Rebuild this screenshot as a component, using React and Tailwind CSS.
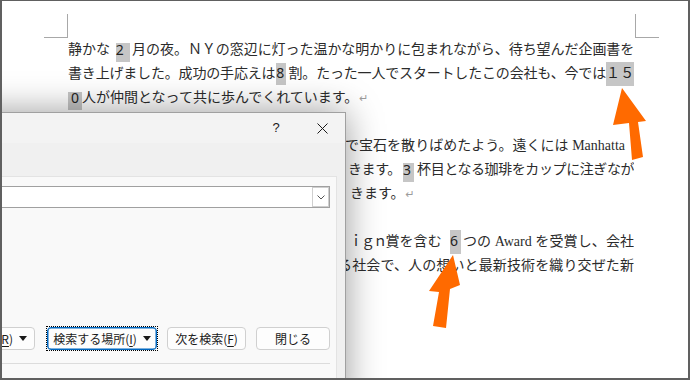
import React from "react";

function Hl({ children, className = "" }) {
  return (
    <span className={"inline-block bg-[#c6c6c6] text-center align-top text-[#222] " + className}>
      {children}
    </span>
  );
}

function Ret() {
  return <span className="ml-[1px] font-['DejaVu_Sans',sans-serif] text-[11px] text-[#9c9c9c]">↵</span>;
}

function Caret() {
  return (
    <svg width="8" height="5" viewBox="0 0 8 5" className="ml-[6px] shrink-0">
      <path d="M0 0h8L4 5z" fill="#1a1a1a" />
    </svg>
  );
}

function Btn({ children, className = "" }) {
  return (
    <button className={"flex h-[23px] shrink-0 items-center justify-center whitespace-nowrap rounded-[4px] border bg-[#fdfdfd] text-[12px] text-[#1a1a1a] " + className}>
      {children}
    </button>
  );
}

function Key({ children }) {
  return <span className="underline underline-offset-2">{children}</span>;
}

// row whose left part is hidden under the dialog: only the visible tail is set
function CutLine({ pad, className = "", children }) {
  return (
    <div className={"flex h-[24px] overflow-hidden leading-[24px] " + className}>
      <span className={"shrink-0 " + pad} />
      <span className="flex-1 [text-align-last:justify]">{children}</span>
    </div>
  );
}

export default function App() {
  return (
    <div className="relative h-[380px] w-[690px] overflow-hidden bg-white font-['Liberation_Serif','Noto_Sans_CJK_JP',serif] text-[14px] text-[#2b2b2b]">
      {/* document page */}
      <div className="pl-[44px] pt-[14px]">
        <div className="flex w-[615px] justify-between">
          <div className="h-[24px] w-[24px] border-b border-r border-[#a8a8a8]" />
          <div className="h-[24px] w-[24px] border-b border-l border-[#a8a8a8]" />
        </div>

        <div className="ml-[24px] w-[566px]">
          <div className="h-[24px] overflow-hidden leading-[24px] tracking-[-0.3px] [text-align-last:justify]">
            静かな
            <Hl className="ml-[6px] mr-[2px] mt-[5px] h-[19px] w-[14px] font-['Noto_Sans',sans-serif] leading-[14px]">2</Hl>
            月の夜。ＮＹの窓辺に灯った温かな明かりに包まれながら、待ち望んだ企画書を
          </div>
          <div className="h-[24px] overflow-hidden leading-[24px] tracking-[-0.3px] [text-align-last:justify]">
            書き上げました。成功の手応えは
            <Hl className="ml-[1px] mr-[2px] mt-[1px] h-[22px] w-[10px] font-['Noto_Sans',sans-serif] leading-[20px]">8</Hl>
            割。たった一人でスタートしたこの会社も、今では
            <Hl className="h-[24px] w-[28px] leading-[24px]">１５</Hl>
          </div>
          <div className="h-[24px] overflow-hidden whitespace-nowrap leading-[24px]">
            <Hl className="mt-[6px] h-[18px] w-[14px] font-['Noto_Sans',sans-serif] leading-[12px]">0</Hl>
            人が仲間となって共に歩んでくれています。
            <Ret />
          </div>
          <div className="h-[24px]" />

          <CutLine pad="w-[277px]" className="pr-[9px]">
            で宝石を散りばめたよう。遠くには Manhatta
          </CutLine>
          <CutLine pad="w-[280px]">
            <span className="tracking-[-0.5px]">
              きます。
              <Hl className="ml-[2px] mr-[3px] mt-[5px] h-[19px] w-[11px] font-['Noto_Sans',sans-serif] leading-[14px]">3</Hl>
              杯目となる珈琲をカップに注ぎなが
            </span>
          </CutLine>
          <div className="flex h-[24px] overflow-hidden whitespace-nowrap leading-[24px]">
            <span className="w-[282px] shrink-0" />
            <span>
              きます。
              <Ret />
            </span>
          </div>
          <div className="h-[24px]" />

          <CutLine pad="w-[281px]">
            <span className="tracking-[-2px]">ｉｇｎ</span>
            賞を含む
            <Hl className="ml-[8px] mr-[2px] h-[24px] w-[11px] font-['Noto_Sans',sans-serif] leading-[22px]">6</Hl>
            つの Award を受賞し、会社
          </CutLine>
          <CutLine pad="w-[270px]">る社会で、人の想いと最新技術を織り交ぜた新</CutLine>
        </div>
      </div>

      {/* find dialog */}
      <div className="absolute left-[-300px] top-[112px] h-[300px] w-[646px] border border-[#a0a0a0] bg-[#f0f0f0] font-['Noto_Sans_CJK_JP',sans-serif] shadow-[0_0_34px_rgba(0,0,0,0.4)]">
        <div className="flex h-[30px] justify-end bg-[#f3f3f3]">
          <div className="flex w-[46px] items-center justify-center font-['Liberation_Sans',sans-serif] text-[13px] text-[#1a1a1a]">?</div>
          <div className="flex w-[46px] items-center justify-center">
            <svg width="11" height="11" viewBox="0 0 11 11">
              <path d="M0.5 0.5l10 10M10.5 0.5l-10 10" stroke="#1a1a1a" strokeWidth="1" fill="none" />
            </svg>
          </div>
        </div>
        <div className="h-[33px]" />

        <div className="mr-[8px] h-[240px] border border-[#e3e3e3] bg-[#f9f9f9] pl-[100px] pr-[6px] pt-[9px]">
          <div className="flex h-[22px] border border-[#a0a0a0] bg-white">
            <div className="flex-1" />
            <div className="flex w-[17px] items-center justify-center border border-[#cfcfcf]">
              <svg width="8" height="5" viewBox="0 0 8 5">
                <path d="M0.5 0.5L4 4L7.5 0.5" stroke="#555" strokeWidth="1" fill="none" />
              </svg>
            </div>
          </div>

          <div className="mt-[118px] flex h-[25px] items-center justify-end">
            <Btn className="mr-[11px] border-[#d0d0d0] pl-[10px] pr-[7px]">
              検索された項目の強調表示(<Key>R</Key>)<Caret />
            </Btn>
            <div className="mr-[9px] shrink-0 border border-dotted border-black">
              <Btn className="w-[110px] border-[#0067c0] shadow-[inset_0_0_0_0.5px_#0067c0]">
                検索する場所(<Key>I</Key>)<Caret />
              </Btn>
            </div>
            <Btn className="mr-[10px] w-[79px] border-[#d0d0d0]">
              次を検索(<Key>F</Key>)
            </Btn>
            <Btn className="w-[74px] border-[#d0d0d0]">閉じる</Btn>
          </div>

          <div className="mt-[12px] h-px bg-[#dcdcdc]" />
        </div>
      </div>

      {/* callout arrows */}
      <svg className="pointer-events-none absolute left-0 top-0" width="690" height="380" viewBox="0 0 690 380">
        <polygon points="622,88 646,121 638,122 643,157 632,160 629,123 613,125" fill="#ff6a00" />
        <polygon points="453,255 460,285 450,289 446,328 433,326 439,292 429,291" fill="#ff6a00" />
      </svg>

      {/* screenshot frame */}
      <div className="pointer-events-none absolute inset-0 border-x-2 border-b-2 border-t border-[#606060]" />
    </div>
  );
}
